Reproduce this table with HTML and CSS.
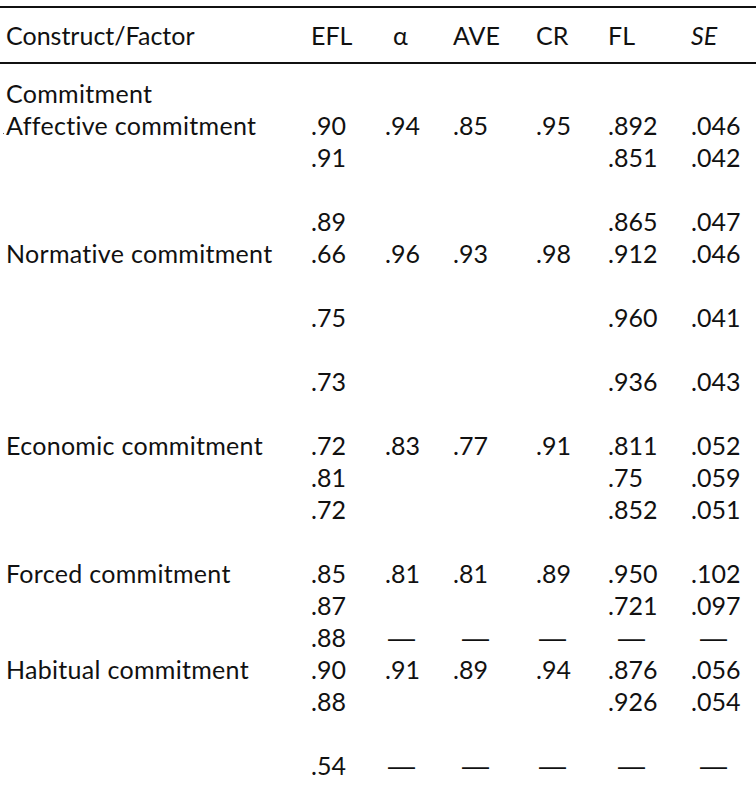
FILE: index.html
```html
<!DOCTYPE html>
<html lang="en">
<head>
<meta charset="utf-8">
<title>Measurement model</title>
<link rel="stylesheet" href="styles.css">
</head>
<body>
<div class="table">
  <div class="head">
    <span class="c0">Construct/Factor</span>
    <span class="c1">EFL</span>
    <span class="c2 alpha">α</span>
    <span class="c3">AVE</span>
    <span class="c4">CR</span>
    <span class="c5">FL</span>
    <span class="c6"><i>SE</i></span>
  </div>
  <div class="body">
    <div class="row"><span class="c0">Commitment</span></div>
    <div class="row"><span class="c0"><span class="speck"></span>Affective commitment</span><span class="c1">.90</span><span class="c2">.94</span><span class="c3">.85</span><span class="c4">.95</span><span class="c5">.892</span><span class="c6">.046</span></div>
    <div class="row"><span class="c1">.91</span><span class="c5">.851</span><span class="c6">.042</span></div>
    <div class="row"></div>
    <div class="row"><span class="c1">.89</span><span class="c5">.865</span><span class="c6">.047</span></div>
    <div class="row"><span class="c0">Normative commitment</span><span class="c1">.66</span><span class="c2">.96</span><span class="c3">.93</span><span class="c4">.98</span><span class="c5">.912</span><span class="c6">.046</span></div>
    <div class="row"></div>
    <div class="row"><span class="c1">.75</span><span class="c5">.960</span><span class="c6">.041</span></div>
    <div class="row"></div>
    <div class="row"><span class="c1">.73</span><span class="c5">.936</span><span class="c6">.043</span></div>
    <div class="row"></div>
    <div class="row"><span class="c0">Economic commitment</span><span class="c1">.72</span><span class="c2">.83</span><span class="c3">.77</span><span class="c4">.91</span><span class="c5">.811</span><span class="c6">.052</span></div>
    <div class="row"><span class="c1">.81</span><span class="c5">.75</span><span class="c6">.059</span></div>
    <div class="row"><span class="c1">.72</span><span class="c5">.852</span><span class="c6">.051</span></div>
    <div class="row"></div>
    <div class="row"><span class="c0">Forced commitment</span><span class="c1">.85</span><span class="c2">.81</span><span class="c3">.81</span><span class="c4">.89</span><span class="c5">.950</span><span class="c6">.102</span></div>
    <div class="row"><span class="c1">.87</span><span class="c5">.721</span><span class="c6">.097</span></div>
    <div class="row"><span class="c1">.88</span><span class="c2 dash d2">—</span><span class="c3 dash d3">—</span><span class="c4 dash d4">—</span><span class="c5 dash d5">—</span><span class="c6 dash d6">—</span></div>
    <div class="row"><span class="c0">Habitual commitment</span><span class="c1">.90</span><span class="c2">.91</span><span class="c3">.89</span><span class="c4">.94</span><span class="c5">.876</span><span class="c6">.056</span></div>
    <div class="row"><span class="c1">.88</span><span class="c5">.926</span><span class="c6">.054</span></div>
    <div class="row"></div>
    <div class="row"><span class="c1">.54</span><span class="c2 dash d2">—</span><span class="c3 dash d3">—</span><span class="c4 dash d4">—</span><span class="c5 dash d5">—</span><span class="c6 dash d6">—</span></div>
  </div>
</div>
</body>
</html>
```

FILE: styles.css
```css
html, body {
  margin: 0;
  padding: 0;
  background: #fff;
}
body {
  font-family: Lato, "Liberation Sans", sans-serif;
  font-size: 25px;
  color: #111;
  font-variant-ligatures: none;
  font-feature-settings: "liga" 0, "clig" 0;
}
.table {
  margin-top: 6px;
  border-top: 2px solid #111;
}
.head, .row {
  display: grid;
  grid-template-columns: 305px 74px 68px 83px 72px 83px 1fr;
  padding-left: 6px;
}
.head {
  height: 54px;
  align-items: center;
  border-bottom: 2px solid #111;
}
.body {
  padding-top: 14px;
}
.row {
  height: 32px;
  line-height: 31px;
}
.c0 { grid-column: 1; position: relative; letter-spacing: 0.3px; }
.head .c0 { letter-spacing: 0; }
.c1 { grid-column: 2; }
.c2 { grid-column: 3; }
.c3 { grid-column: 4; }
.c4 { grid-column: 5; }
.c5 { grid-column: 6; }
.c6 { grid-column: 7; }
.alpha { padding-left: 8px; }
.dash {
  font-family: "Liberation Sans", sans-serif;
  font-size: 27px;
  line-height: 32px;
}
.d2 { padding-left: 3px; }
.d3 { padding-left: 9px; }
.d4 { padding-left: 3px; }
.d5 { padding-left: 10px; }
.d6 { padding-left: 9px; }
.speck {
  position: absolute;
  left: -3px;
  top: 23px;
  width: 1px;
  height: 1px;
  background: #666;
}
```
